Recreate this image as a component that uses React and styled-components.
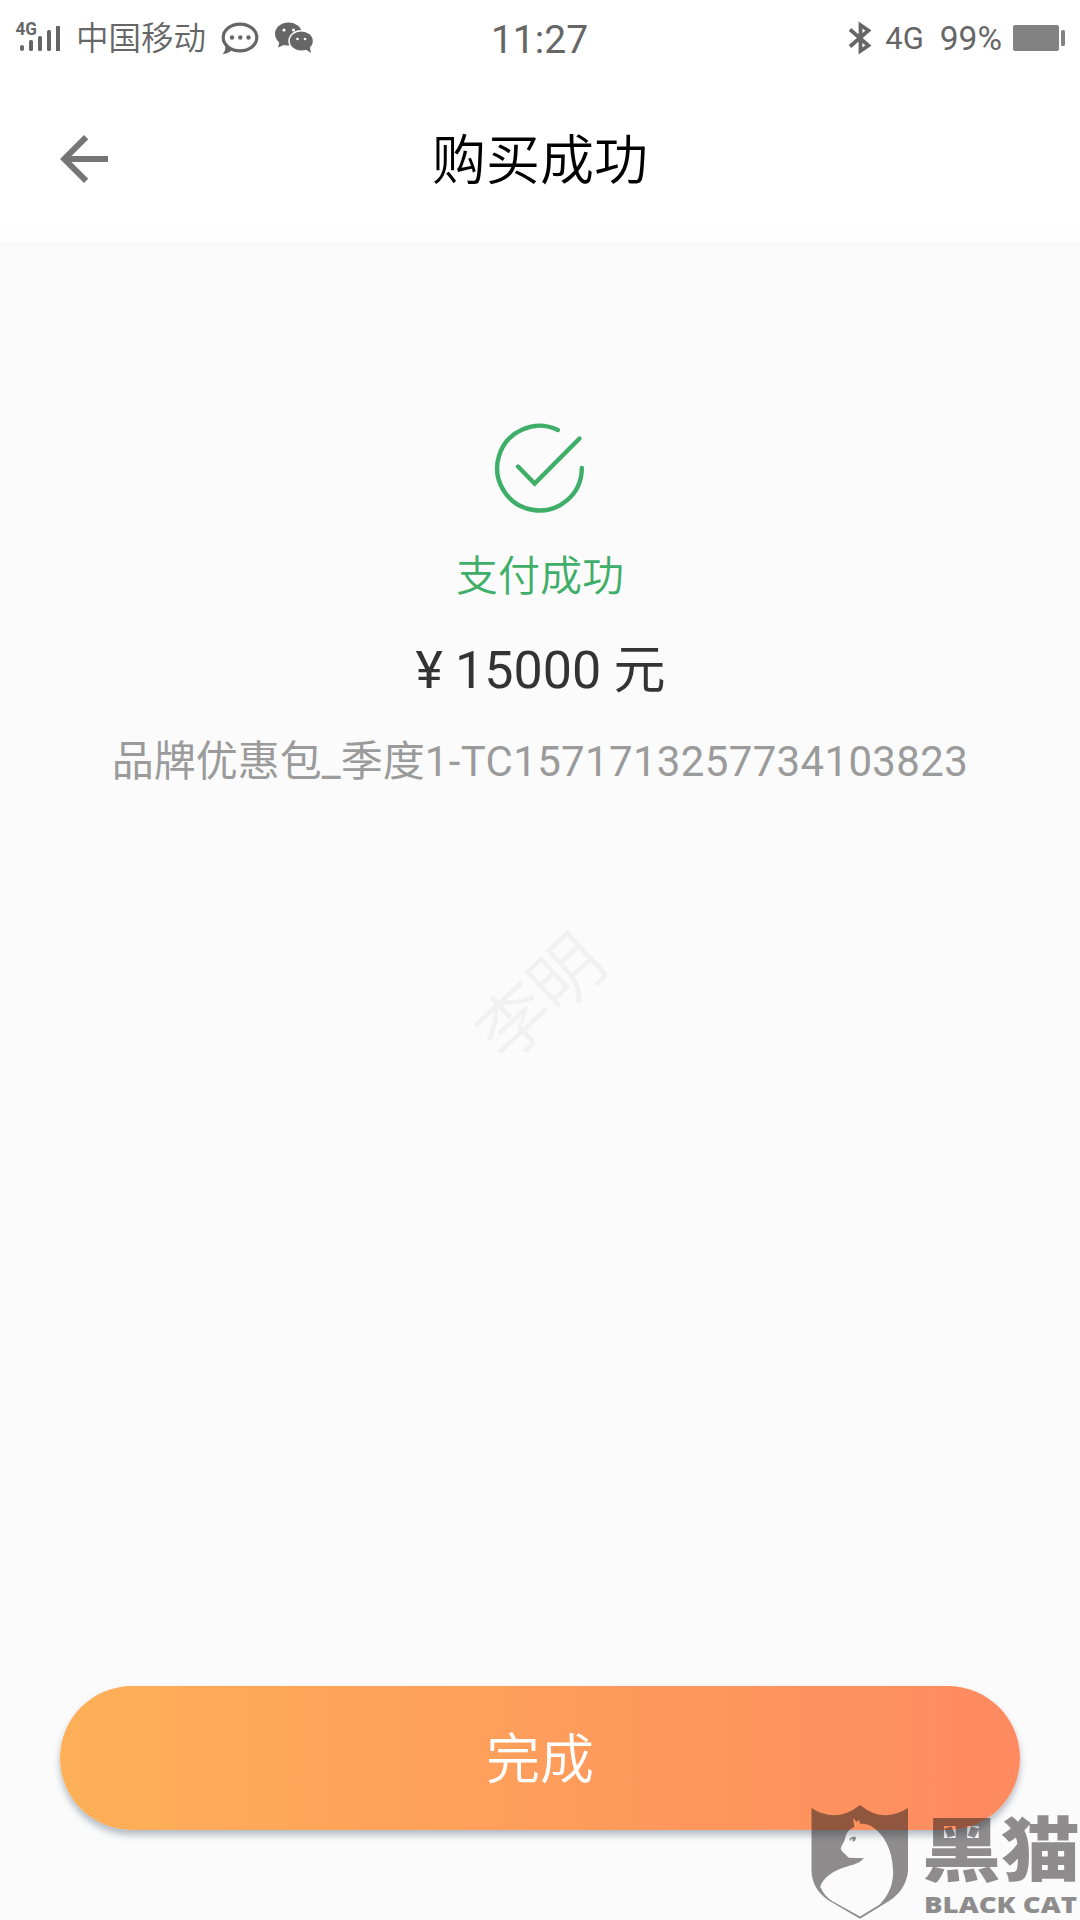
import styled, { createGlobalStyle } from 'styled-components';

const GlobalStyle = createGlobalStyle`
  * {
    box-sizing: border-box;
  }
  body {
    margin: 0;
    background: #fbfbfb;
    font-family: Roboto, 'Noto Sans CJK SC', sans-serif;
  }
`;

// status bar icons
const SignalIcon = () => (
  <OpenSvg width="46" height="32" viewBox="0 0 46 32" fill="#666">
    <text x="-0.5" y="13" fontSize="17.5" fontWeight="700" fontFamily="Roboto" textLength="21.5" lengthAdjust="spacingAndGlyphs">4G</text>
    <rect x="4" y="23" width="4" height="6" rx="2" />
    <rect x="13" y="18" width="4" height="11" rx="1.5" />
    <rect x="22" y="14" width="4" height="15" rx="1.5" />
    <rect x="31" y="8" width="4" height="21" rx="1.5" />
    <rect x="40" y="4" width="4" height="25" rx="0.5" />
  </OpenSvg>
);

const ChatIcon = () => (
  <svg width="38" height="33" viewBox="0 0 38 33">
    <ellipse cx="19" cy="15.5" rx="16.8" ry="13.3" fill="none" stroke="#666" strokeWidth="3.2" />
    <path d="M4 23 Q5.5 28 1.5 32 Q7 32 11 28 Z" fill="#666" />
    <circle cx="11" cy="15.5" r="2.2" fill="#666" />
    <circle cx="19.3" cy="15.5" r="2.2" fill="#666" />
    <circle cx="27.5" cy="15.5" r="2.2" fill="#666" />
  </svg>
);

const WechatIcon = () => (
  <svg width="38" height="32" viewBox="0 0 38 32">
    <path d="M5 18 L3 25.5 L11 22 Z" fill="#666" />
    <ellipse cx="13.5" cy="12" rx="13.5" ry="11.5" fill="#666" />
    <circle cx="9" cy="8" r="1.6" fill="#fff" />
    <circle cx="18.5" cy="8" r="1.6" fill="#fff" />
    <ellipse cx="26.3" cy="19" rx="13" ry="11" fill="#fff" />
    <ellipse cx="26.3" cy="19" rx="11.5" ry="9.5" fill="#666" />
    <path d="M30 27 L36 31 L34.5 24 Z" fill="#666" />
    <circle cx="22.5" cy="17" r="1.3" fill="#fff" />
    <circle cx="30" cy="17" r="1.3" fill="#fff" />
  </svg>
);

const BluetoothIcon = () => (
  <svg width="24" height="34" viewBox="0 0 24 34">
    <path d="M3 8.5 L21.5 24.5 L13.5 30 V4 L21.5 9.5 L3 25.5" fill="none" stroke="#666" strokeWidth="3.8" />
  </svg>
);

const BatteryIcon = () => (
  <svg width="54" height="28" viewBox="0 0 54 28" fill="#828282">
    <rect x="0" y="1" width="46" height="26" rx="2" />
    <rect x="48" y="6" width="4" height="16" rx="1.5" />
  </svg>
);

const BackIcon = () => (
  <svg width="72" height="72" viewBox="0 0 24 24" fill="#757575">
    <path d="M20 11H7.83l5.59-5.59L12 4l-8 8 8 8 1.41-1.41L7.83 13H20v-2z" />
  </svg>
);

const CheckIcon = () => (
  <svg width="92" height="92" viewBox="0 0 92 92" fill="none" stroke="#3fae69" strokeWidth="4.4" strokeLinecap="round">
    <path d="M63.8 8 A42.3 42.3 0 1 0 87.8 46" />
    <path d="M24 44.5 L40.6 61.5 L85.5 16.5" />
  </svg>
);

const ShieldIcon = () => (
  <svg width="98" height="114" viewBox="0 0 98 114">
    <path
      fillRule="evenodd"
      d="M0.5 3 Q25 19 49 0 Q72 19 97 3 V66 C96 79 88 90 78 96 L49 113.7 L17 95 C6 87 1 78 0.5 66 Z
         M42 13.3 L43.5 22 C38 24 35 28 34 34 C33.5 37 31 39 29.7 43.3 C30 46 33 48 37.7 52.7 L53 53.2 C47 60 38 60 30 63.5 C21 67 12 73 9.2 81.7 C12 88 16 93 22 96.5 L49 111.5 L68.7 99.5 C78 90 83 78 82 64 C81 44 73 29 60 21 C56 19 52 18.5 49 18.8 L48 14.2 L46 17 Z"
    />
    <path d="M38.5 33.5 Q41 31.5 44.5 31.5 Q46 35.5 41.5 37 Q42.5 34.5 41 33.5 Q39.5 35 40 36.5 Z" />
  </svg>
);

function App() {
  return (
    <Page>
      <GlobalStyle />
      <StatusBar>
        <StatusLeft>
          <SignalIcon />
          <Carrier>中国移动</Carrier>
          <ChatIcon />
          <WechatIcon />
        </StatusLeft>
        <Clock>11:27</Clock>
        <StatusRight>
          <BluetoothIcon />
          <Network>4G</Network>
          <Percent>99%</Percent>
          <BatteryIcon />
        </StatusRight>
      </StatusBar>
      <Header>
        <BackButton aria-label="返回">
          <BackIcon />
        </BackButton>
        <Title>购买成功</Title>
      </Header>
      <Content>
        <CheckIcon />
        <Status>支付成功</Status>
        <Price>¥ 15000 元</Price>
        <Order>
          品牌优惠包_季度<OrderNo>1-TC1571713257734103823</OrderNo>
        </Order>
        <UserMark>李明</UserMark>
      </Content>
      <Footer>
        <DoneButton>完成</DoneButton>
      </Footer>
      <BlackCat>
        <ShieldIcon />
        <OpenSvg width="153" height="106" viewBox="0 0 153 106">
          <text x="-3" y="63" fontSize="70" fontWeight="900" fontFamily="Noto Sans CJK SC" textLength="158" lengthAdjust="spacingAndGlyphs">黑猫</text>
          <text x="-1" y="99.5" fontSize="22.5" fontWeight="800" fontFamily="Open Sans" textLength="153" lengthAdjust="spacingAndGlyphs">BLACK CAT</text>
        </OpenSvg>
      </BlackCat>
    </Page>
  );
}

export default App;

const OpenSvg = styled.svg`
  overflow: visible;
`;

const Page = styled.div`
  position: relative;
  display: flex;
  flex-direction: column;
  width: 1080px;
  height: 1920px;
  overflow: hidden;
  background: #fbfbfb;
`;

const StatusBar = styled.div`
  display: grid;
  grid-template-columns: 1fr auto 1fr;
  align-items: center;
  height: 76px;
  padding: 0 13px 0 16px;
  background: #fff;
  color: #666;
`;

const StatusLeft = styled.div`
  display: flex;
  align-items: center;
  svg + svg {
    margin-left: 16px;
  }
`;

const Carrier = styled.span`
  margin: 0 15px 0 14px;
  padding-top: 2px;
  font-size: 32.5px;
  line-height: 40px;
  font-weight: 350;
`;

const Clock = styled.span`
  padding: 3px 4px 0 0;
  font-size: 39px;
  line-height: 46px;
`;

const StatusRight = styled.div`
  display: flex;
  justify-content: flex-end;
  align-items: center;
`;

const Network = styled.span`
  margin-left: 14px;
  padding-top: 1px;
  font-size: 31px;
`;

const Percent = styled.span`
  margin: 0 11px 0 16px;
  font-size: 33.5px;
`;

const Header = styled.header`
  display: grid;
  grid-template-columns: 72px 1fr 72px;
  align-items: center;
  height: 166px;
  padding: 0 48px;
  background: linear-gradient(#fff 150px, #fcfcfc);
  box-shadow: 0 6px 8px rgba(0, 0, 0, 0.015);
`;

const BackButton = styled.button`
  display: flex;
  padding: 0;
  border: 0;
  background: none;
`;

const Title = styled.h1`
  margin: 0;
  padding-top: 6px;
  color: #000;
  font-size: 54px;
  font-weight: 350;
  line-height: 72px;
  text-align: center;
`;

const Content = styled.main`
  display: flex;
  flex: 1;
  flex-direction: column;
  align-items: center;
  padding-top: 180px;
`;

const Status = styled.p`
  margin: 33px 0 0;
  color: #3fae69;
  font-size: 42px;
  font-weight: 350;
  line-height: 60px;
`;

const Price = styled.p`
  margin: 28px 0 0;
  padding-left: 1px;
  color: #333;
  font-size: 52px;
  line-height: 72px;
  word-spacing: -0.5px;
`;

const Order = styled.p`
  margin: 25px 0 0;
  color: #9b9b9b;
  font-size: 42px;
  line-height: 60px;
  white-space: nowrap;
`;

const OrderNo = styled.span`
  letter-spacing: 0.34px;
`;

const UserMark = styled.div`
  margin-top: 163px;
  padding-left: 4px;
  color: #f1f1f1;
  font-size: 71px;
  font-weight: 350;
  line-height: 90px;
  transform: rotate(-43deg);
`;

const Footer = styled.footer`
  padding: 0 60px 90px;
`;

const DoneButton = styled.button`
  display: block;
  width: 100%;
  height: 144px;
  padding: 6px 0 0;
  border: 0;
  border-radius: 72px;
  background: linear-gradient(90deg, #fdb057, #ff8a60);
  box-shadow: 0 5px 7px rgba(70, 90, 110, 0.4);
  color: #fff;
  font-family: inherit;
  font-size: 54px;
  font-weight: 350;
  line-height: 72px;
`;

const BlackCat = styled.div`
  position: absolute;
  right: 2px;
  bottom: 1px;
  display: flex;
  align-items: flex-end;
  gap: 16px;
  fill: #231f20;
  opacity: 0.5;
`;
